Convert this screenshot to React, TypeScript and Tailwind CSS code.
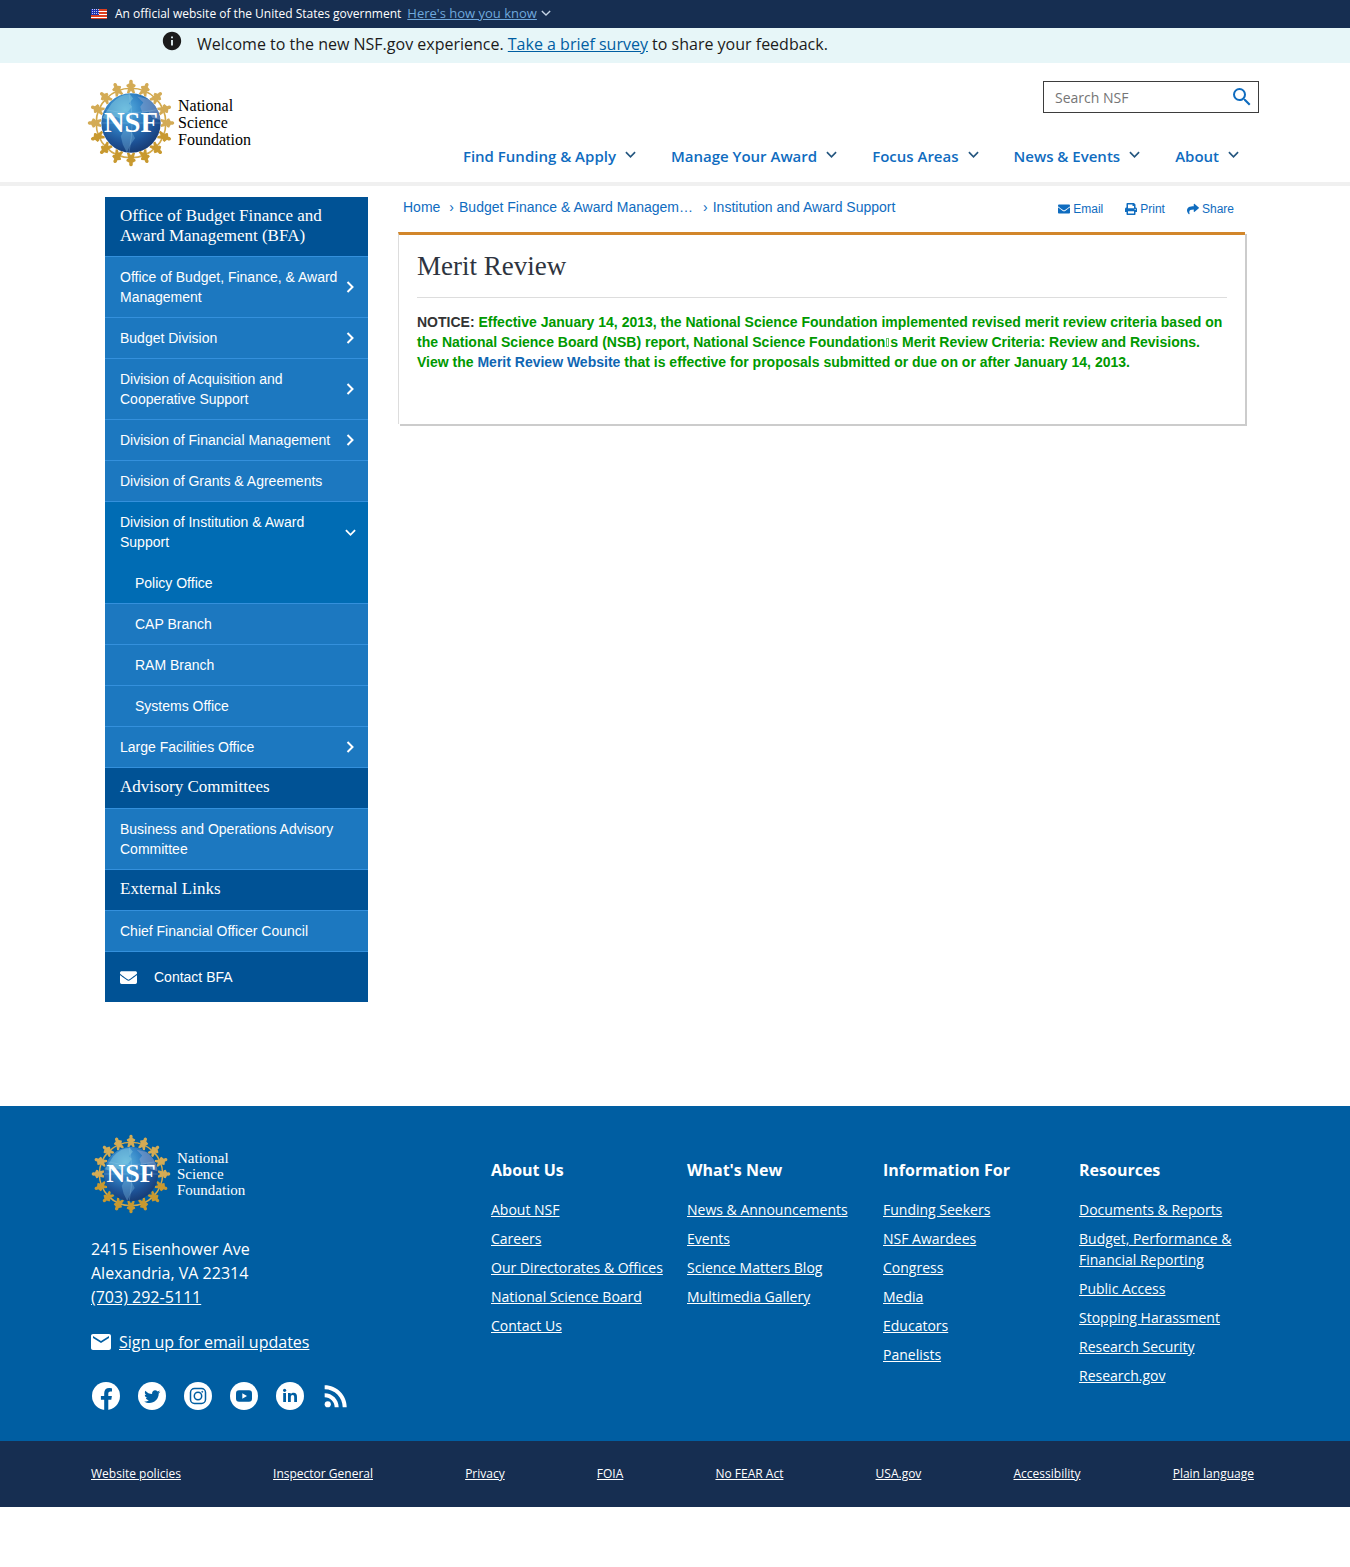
import React from "react";
import { FaEnvelope, FaPrint, FaShare } from "react-icons/fa";
import { MdEmail, MdInfo, MdRssFeed, MdSearch } from "react-icons/md";

const SANS = "font-['Liberation_Sans',Arial,sans-serif]";
const OPEN = "font-['Open_Sans',sans-serif]";
const SERIF = "font-['Liberation_Serif',serif]";

function Chevron({ className, dir = "down", weight = 2 }: { className?: string; dir?: "down" | "right"; weight?: number }) {
  return (
    <svg viewBox="0 0 12 12" className={className} fill="none" stroke="currentColor" strokeWidth={weight} aria-hidden="true">
      <path d={dir === "down" ? "M1 3.5L6 8.5L11 3.5" : "M3.5 1L8.5 6L3.5 11"} />
    </svg>
  );
}

function Flag() {
  return (
    <svg viewBox="0 0 16 10" className="h-2.5 w-4 shrink-0" aria-hidden="true">
      <rect width="16" height="10" fill="#db3e1f" />
      {[2, 5, 8].map((y) => (
        <rect key={y} y={y} width="16" height="1" fill="#fff" />
      ))}
      <rect width="8" height="6" fill="#1e33b1" />
      {[1, 3, 5].map((y) => [1, 3, 5, 7].map((x) => <rect key={`${x}-${y}`} x={x} y={y - 1} width="1" height="1" fill="#c3caee" />))}
    </svg>
  );
}

function Emblem({ id, className }: { id: string; className: string }) {
  const figures = Array.from({ length: 16 }, (_, i) => (i * 360) / 16);
  return (
    <svg viewBox="0 0 86 86" className={className} role="img" aria-label="NSF">
      <defs>
        <radialGradient id={`${id}-globe`} cx="0.4" cy="0.28" r="0.75">
          <stop offset="0" stopColor="#5cb4e0" />
          <stop offset="0.4" stopColor="#3181c4" />
          <stop offset="0.75" stopColor="#1d5296" />
          <stop offset="1" stopColor="#173a72" />
        </radialGradient>
        <clipPath id={`${id}-clip`}>
          <circle cx="43" cy="43" r="29" />
        </clipPath>
      </defs>
      <circle cx="43" cy="43" r="34" fill="none" stroke="#d3a94a" strokeWidth="1.6" />
      {figures.map((a) => (
        <path
          key={a}
          transform={`rotate(${a} 43 43)`}
          d="M43 0.8C44.6 0.8 45.1 2.4 44.6 4.2L47.6 5.8L47 7.8L45.6 8.2L47 13.6L45 14.2L43 11.6L41 14.2L39 13.6L40.4 8.2L39 7.8L38.4 5.8L41.4 4.2C40.9 2.4 41.4 0.8 43 0.8Z"
          fill={a > 90 && a < 270 ? "#c8992f" : "#d3ab55"}
        />
      ))}
      <circle cx="43" cy="43" r="29" fill={`url(#${id}-globe)`} />
      <g clipPath={`url(#${id}-clip)`}>
        <path d="M24 24Q32 15 42 15L45 19L41 24L44 27L40 32L35 33L33 39L28 37L22 40L15 38Z" fill="#86cbe0" opacity="0.5" />
        <path d="M49 17L62 20L69 29L72 40L64 38L60 32L54 33L52 27L55 23Z" fill="#8fa5cf" opacity="0.5" />
        <path d="M36 50L44 52L47 58L42 65L39 72L35 64L33 56Z" fill="#75b3dd" opacity="0.4" />
        <path d="M41 14Q47 43 41 72M14 43H72M18 30Q43 36 68 30" fill="none" stroke="#9dd2ee" strokeWidth="0.7" opacity="0.4" />
      </g>
      <text x="43" y="52" textAnchor="middle" fontFamily="'Liberation Serif', serif" fontWeight="bold" fontSize="28" fill="#fff">
        NSF
      </text>
    </svg>
  );
}

function TopBar() {
  return (
    <div className="bg-[#162e51] text-white">
      <div className="mx-auto flex h-7 max-w-[1168px] items-center text-[12px]">
        <Flag />
        <span className="ml-2">An official website of the United States government</span>
        <button type="button" className="ml-1.5 flex items-center gap-1 text-[13px] text-[#6fa8dc]">
          <span className="underline">Here's how you know</span>
          <Chevron className="-mt-0.5 size-2.5 text-[#c5d4e6]" weight={1.6} />
        </button>
      </div>
    </div>
  );
}

function Notice() {
  return (
    <div className="bg-[#e7f6f8] text-[#1b1b1b]">
      <div className="mx-auto flex h-[35px] max-w-[1168px] items-start pl-[70px] text-[16px] leading-6">
        <MdInfo className="mt-0.5 size-[22px]" aria-hidden="true" />
        <p className="mt-1 ml-3.5">
          Welcome to the new NSF.gov experience.{" "}
          <a href="#survey" className="text-[#005ea2] underline">Take a brief survey</a> to share your feedback.
        </p>
      </div>
    </div>
  );
}

const NAV = ["Find Funding & Apply", "Manage Your Award", "Focus Areas", "News & Events", "About"];

function Header() {
  return (
    <header className="border-b-4 border-[#f0f0f0] bg-white">
      <div className="mx-auto flex max-w-[1168px] justify-between pt-4 pb-[15px]">
        <a href="#home" className="-ml-1 flex items-start">
          <Emblem id="top" className="size-[88px]" />
          <span className={`${SERIF} mt-[18px] ml-[3px] text-[16px] leading-[17px] text-black`}>
            National<br />Science<br />Foundation
          </span>
        </a>
        <div className="flex flex-col items-end justify-between pt-0.5">
          <form className="flex h-8 w-[216px] items-center border border-[#3d3d3d] pr-1 pl-[11px]" onSubmit={(e) => e.preventDefault()}>
            <input aria-label="Search NSF" placeholder="Search NSF" className="min-w-0 flex-1 text-[14px] outline-none placeholder:text-[#757575]" />
            <button type="submit" aria-label="Search" className="text-[#0f6cbf]">
              <MdSearch className="size-6" />
            </button>
          </form>
          <nav aria-label="Main" className="flex gap-[35px] pr-5 pb-px">
            {NAV.map((n) => (
              <button key={n} type="button" className="flex items-center gap-[9px] text-[15px] leading-5 font-semibold text-[#0f6cbf]">
                {n}
                <Chevron className="-mt-1 size-[11px] text-[#24567f]" weight={1.8} />
              </button>
            ))}
          </nav>
        </div>
      </div>
    </header>
  );
}

type Item = { label: string; arrow?: "right" | "down"; sub?: boolean; active?: boolean; joined?: boolean };

const BFA: Item[] = [
  { label: "Office of Budget, Finance, & Award Management", arrow: "right" },
  { label: "Budget Division", arrow: "right" },
  { label: "Division of Acquisition and Cooperative Support", arrow: "right" },
  { label: "Division of Financial Management", arrow: "right" },
  { label: "Division of Grants & Agreements" },
  { label: "Division of Institution & Award Support", arrow: "down", active: true, joined: true },
  { label: "Policy Office", sub: true, active: true },
  { label: "CAP Branch", sub: true },
  { label: "RAM Branch", sub: true },
  { label: "Systems Office", sub: true },
  { label: "Large Facilities Office", arrow: "right" },
];

function SideItem({ label, arrow, sub, active, joined }: Item) {
  return (
    <li className={`border-b ${joined ? "border-[#006cb4]" : "border-[#3490dc]"} ${active ? "bg-[#006cb4]" : "bg-[#1c78c0]"}`}>
      <a href="#section" className={`flex items-center justify-between py-2.5 pr-3 ${sub ? "pl-[30px]" : "pl-[15px]"}`}>
        <span className="max-w-[220px]">{label}</span>
        {arrow && <Chevron dir={arrow} className={arrow === "down" ? "size-[11px] shrink-0" : "size-3 shrink-0"} weight={2} />}
      </a>
    </li>
  );
}

function SideHeading({ children }: { children: React.ReactNode }) {
  return <h2 className={`${SERIF} min-h-[41px] border-b border-[#3490dc] bg-[#005295] px-[15px] pt-[9px] pb-2.5 text-[17px] leading-5`}>{children}</h2>;
}

function Sidebar() {
  return (
    <aside className="w-full shrink-0 text-[14px] leading-5 text-white md:w-[263px]">
      <SideHeading>Office of Budget Finance and Award Management (BFA)</SideHeading>
      <ul>{BFA.map((i) => <SideItem key={i.label} {...i} />)}</ul>
      <SideHeading>Advisory Committees</SideHeading>
      <ul><SideItem label="Business and Operations Advisory Committee" /></ul>
      <SideHeading>External Links</SideHeading>
      <ul><SideItem label="Chief Financial Officer Council" /></ul>
      <a href="#contact" className="flex items-center gap-[17px] bg-[#005295] p-[15px]">
        <FaEnvelope className="size-[17px]" aria-hidden="true" />
        Contact BFA
      </a>
    </aside>
  );
}

const ACTIONS = [
  { label: "Email", Icon: FaEnvelope },
  { label: "Print", Icon: FaPrint },
  { label: "Share", Icon: FaShare },
];

function Content() {
  return (
    <div className="min-w-0 flex-1">
      <div className="flex justify-between text-[#0f6cbf]">
        <nav aria-label="Breadcrumb" className="flex min-w-0 pl-[5px] text-[14px] leading-5">
          <a href="#home">Home</a>
          <span className="mr-[5px] ml-[9px]">›</span>
          <a href="#bfa" className="whitespace-nowrap">Budget Finance &amp; Award Managem…</a>
          <span className="mr-[5px] ml-[10px]">›</span>
          <a href="#ias" className="whitespace-nowrap">Institution and Award Support</a>
        </nav>
        <div className="flex gap-[22px] pt-0.5 pr-[11px] text-[12px] leading-5">
          {ACTIONS.map(({ label, Icon }) => (
            <button key={label} type="button" className="flex items-center gap-[3px]">
              <Icon className="size-3" aria-hidden="true" />
              {label}
            </button>
          ))}
        </div>
      </div>
      <article className="mt-[13px] border-t-[3px] border-l border-t-[#d2862a] border-l-[#dddddd] px-[18px] pb-[52px] shadow-[2px_2px_0_#cccccc]">
        <h1 className={`${SERIF} border-b border-[#dddddd] py-[15px] text-[27px] leading-8 text-[#2e3440]`}>Merit Review</h1>
        <p className="mt-[14px] text-[14px] leading-5 font-bold text-[#009900]">
          <span className="text-[#333333]">NOTICE:</span> Effective January 14, 2013, the National Science Foundation implemented revised merit review criteria based on the National Science Board (NSB) report, National Science Foundation
          <span className="mx-px inline-block h-[9px] w-[3px] border border-[#66c266]" aria-hidden="true" />
          s Merit Review Criteria: Review and Revisions. View the{" "}
          <a href="#merit" className="text-[#0f66b3]">Merit Review Website</a> that is effective for proposals submitted or due on or after January 14, 2013.
        </p>
      </article>
    </div>
  );
}

const COLUMNS = [
  { title: "About Us", links: ["About NSF", "Careers", "Our Directorates & Offices", "National Science Board", "Contact Us"] },
  { title: "What's New", links: ["News & Announcements", "Events", "Science Matters Blog", "Multimedia Gallery"] },
  { title: "Information For", links: ["Funding Seekers", "NSF Awardees", "Congress", "Media", "Educators", "Panelists"] },
  { title: "Resources", links: ["Documents & Reports", "Budget, Performance & Financial Reporting", "Public Access", "Stopping Harassment", "Research Security", "Research.gov"] },
];

const GLYPHS: Record<string, React.ReactNode> = {
  Facebook: <path d="M12.2 29V17.8H8.9V13.9H12.2V11.2C12.2 7.9 14.1 6.1 17.1 6.1C18.5 6.1 20 6.4 20 6.4V9.6H18.4C16.8 9.6 16.3 10.6 16.3 11.6V13.9H19.9L19.3 17.8H16.3V29Z" fill="#005ea2" />,
  Twitter: <path d="M22.3 9.8C21.7 10.1 21 10.3 20.3 10.4C21.1 10 21.6 9.3 21.9 8.5C21.2 8.9 20.4 9.2 19.6 9.4C18.2 7.9 16 8 14.9 9.2C14.1 10.1 13.9 11.1 14.2 12.1C11.5 12 9.1 10.7 7.3 8.7C6.4 10.3 6.9 12.2 8.3 13.1C7.8 13.1 7.2 13 6.8 12.7C6.8 14.3 7.9 15.6 9.4 16C8.9 16.1 8.4 16.1 7.9 16C8.3 17.3 9.5 18.2 10.9 18.2C9.6 19.2 7.9 19.7 6.2 19.5C12.5 23.4 20.8 19.3 20.7 11.6C21.3 11.1 21.9 10.5 22.3 9.8Z" fill="#005ea2" />,
  Instagram: (
    <g fill="none" stroke="#005ea2" strokeWidth="1.5">
      <rect x="6.5" y="6.5" width="15" height="15" rx="4" />
      <circle cx="14" cy="14" r="3.7" />
      <circle cx="18.3" cy="9.8" r="0.7" fill="#005ea2" strokeWidth="0.4" />
    </g>
  ),
  YouTube: (
    <>
      <rect x="6" y="8.2" width="16" height="11.6" rx="3" fill="#005ea2" />
      <path d="M12.3 11.3V16.7L17 14Z" fill="#fff" />
    </>
  ),
  LinkedIn: (
    <g fill="#005ea2">
      <circle cx="8.6" cy="8.3" r="1.6" />
      <rect x="7.2" y="11" width="2.8" height="9" />
      <path d="M12 11H14.7V12.3C15.3 11.3 16.3 10.8 17.5 10.8C20.3 10.8 21 12.5 21 15V20H18.2V15.5C18.2 14.3 18.1 13.1 16.6 13.1C15.1 13.1 14.8 14.2 14.8 15.5V20H12Z" />
    </g>
  ),
};

function Footer() {
  return (
    <footer>
      <div className="bg-[#005ea2] text-white">
        <div className="mx-auto flex max-w-[1168px] flex-col pt-7 pb-[30px] md:flex-row">
          <div className="w-[400px] shrink-0">
            <a href="#home" className="flex items-start">
              <Emblem id="foot" className="size-20" />
              <span className={`${SERIF} mt-4 ml-1.5 text-[15px] leading-4`}>
                National<br />Science<br />Foundation
              </span>
            </a>
            <address className="mt-[23px] text-[16px] leading-6 not-italic">
              2415 Eisenhower Ave<br />Alexandria, VA 22314<br />
              <a href="tel:7032925111" className="underline">(703) 292-5111</a>
            </address>
            <a href="#signup" className="mt-[21px] flex items-center text-[16px] leading-6">
              <MdEmail className="-ml-0.5 size-6" aria-hidden="true" />
              <span className="ml-1.5 underline">Sign up for email updates</span>
            </a>
            <div className="mt-[27px] ml-px flex h-[30px] items-center gap-[18px]">
              {Object.entries(GLYPHS).map(([name, glyph]) => (
                <a key={name} href={`#${name}`} aria-label={name}>
                  <svg viewBox="0 0 28 28" className="size-7">
                    <circle cx="14" cy="14" r="14" fill="#fff" />
                    {glyph}
                  </svg>
                </a>
              ))}
              <a href="#rss" aria-label="RSS" className="-ml-[3px]">
                <MdRssFeed className="size-[34px]" />
              </a>
            </div>
          </div>
          <div className="grid flex-1 grid-cols-4 gap-4 pt-6">
            {COLUMNS.map((c) => (
              <div key={c.title}>
                <h3 className="text-[16px] leading-6 font-bold">{c.title}</h3>
                <ul className="mt-[17px] flex flex-col gap-2 text-[14px] leading-[21px]">
                  {c.links.map((l) => (
                    <li key={l}><a href="#link" className="underline">{l}</a></li>
                  ))}
                </ul>
              </div>
            ))}
          </div>
        </div>
      </div>
      <div className="bg-[#162e51] text-white">
        <nav aria-label="Policies" className="mx-auto flex max-w-[1168px] flex-wrap justify-between py-6 pr-[5px] text-[12px] leading-[18px]">
          {["Website policies", "Inspector General", "Privacy", "FOIA", "No FEAR Act", "USA.gov", "Accessibility", "Plain language"].map((l) => (
            <a key={l} href="#policy" className="underline">{l}</a>
          ))}
        </nav>
      </div>
    </footer>
  );
}

export default function App() {
  return (
    <div className={`${OPEN} bg-white`}>
      <TopBar />
      <Notice />
      <Header />
      <main className={`${SANS} mx-auto flex max-w-[1170px] flex-col gap-[30px] px-[15px] pt-[11px] pb-[104px] md:flex-row`}>
        <Sidebar />
        <Content />
      </main>
      <Footer />
    </div>
  );
}
